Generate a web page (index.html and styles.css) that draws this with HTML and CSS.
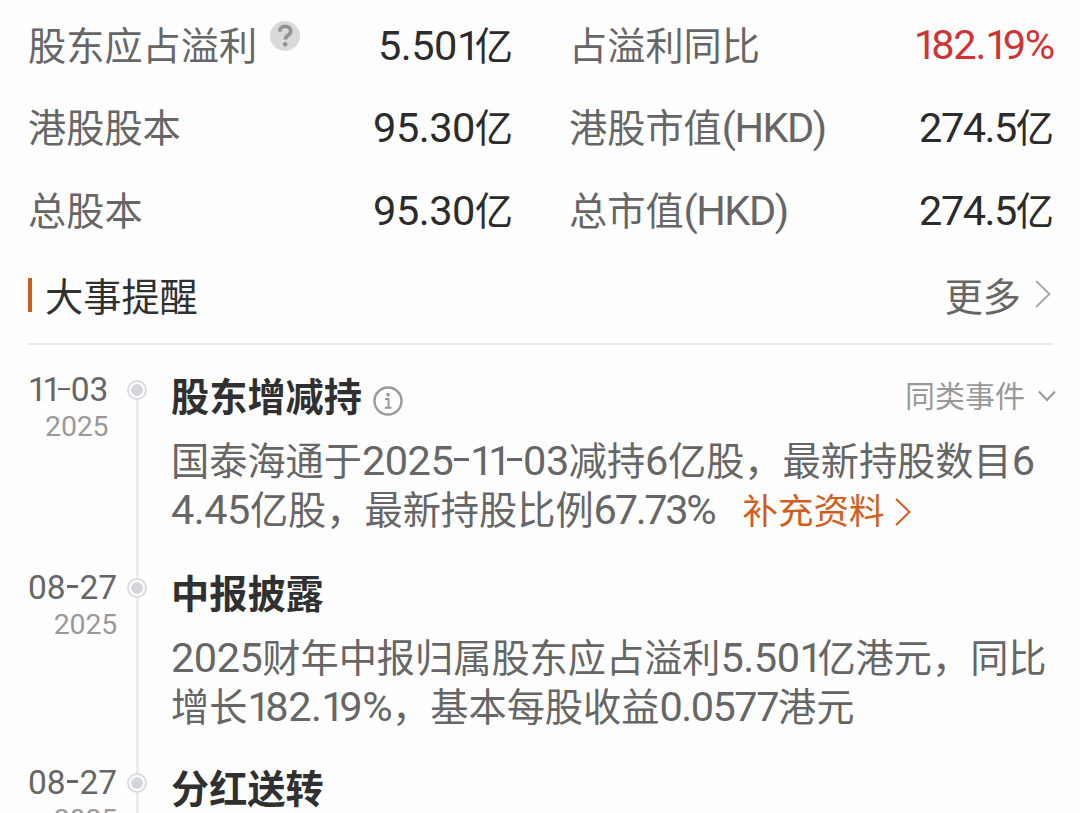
FILE: index.html
```html
<!DOCTYPE html>
<html lang="zh-CN">
<head>
  <meta charset="UTF-8" />
  <meta name="viewport" content="width=device-width, initial-scale=1.0" />
  <title>大事提醒</title>
  <link rel="stylesheet" href="styles.css">
</head>
<body>

  <!-- Key figures -->
  <section class="figures">
    <div class="figure">
      <span class="label">股东应占溢利</span>
      <svg class="help" viewBox="0 0 30 30">
        <circle cx="15" cy="15" r="15" fill="#dadada"/>
        <path d="M9.600 10.600C9.800 7.200 12 5.400 15.200 5.400c3.300 0 5.500 1.800 5.500 4.600 0 2.300-1.200 3.300-2.900 4.500-1.700 1.200-2.400 2-2.400 4.100" fill="none" stroke="#929296" stroke-width="3.700"/>
        <circle cx="15.200" cy="23.200" r="2.300" fill="#929296"/>
      </svg>
      <span class="value"><span class="num">5.50<i class="one">1</i></span>亿</span>
    </div>
    <div class="figure">
      <span class="label">占溢利同比</span>
      <span class="value up"><span class="num"><i class="one">1</i>82.<i class="one">1</i>9%</span></span>
    </div>
    <div class="figure">
      <span class="label">港股股本</span>
      <span class="value"><span class="num">95.30</span>亿</span>
    </div>
    <div class="figure">
      <span class="label">港股市值<span class="num tight">(HKD)</span></span>
      <span class="value"><span class="num tight">274.5</span>亿</span>
    </div>
    <div class="figure">
      <span class="label">总股本</span>
      <span class="value"><span class="num">95.30</span>亿</span>
    </div>
    <div class="figure">
      <span class="label">总市值<span class="num tight">(HKD)</span></span>
      <span class="value"><span class="num tight">274.5</span>亿</span>
    </div>
  </section>

  <!-- Section title -->
  <header class="section-head">
    <h2>大事提醒</h2>
    <a class="more">更多
      <svg width="16" height="28" viewBox="0 0 16 28"><path d="M1 1l13.500 13L1 27" fill="none" stroke="#aaa" stroke-width="2"/></svg>
    </a>
  </header>

  <!-- Events -->
  <section class="timeline">
    <article class="event">
      <div class="date">
        <span class="day"><i class="one">1</i><i class="one">1</i><i class="dash"></i>03</span>
        <span class="year">2025</span>
      </div>
      <div class="axis"><span class="dot"></span></div>
      <div class="content">
        <div class="title-row">
          <h3>股东增减持</h3>
          <svg class="info" viewBox="0 0 30 30">
            <circle cx="15" cy="15" r="13.500" fill="none" stroke="#999" stroke-width="2.400"/>
            <circle cx="15" cy="8.700" r="1.900" fill="#999"/>
            <path d="M12 13h3.500v8.500M11.800 21.800h6.700" fill="none" stroke="#999" stroke-width="2"/>
          </svg>
          <a class="similar">同类事件
            <svg width="18" height="12" viewBox="0 0 18 12"><path d="M1 1.500l8 8.500 8-8.500" fill="none" stroke="#999" stroke-width="2"/></svg>
          </a>
        </div>
        <p>国泰海通于<span class="num">2025<i class="dash"></i><i class="one">1</i><i class="one">1</i><i class="dash"></i>03</span>减持<span class="num">6</span>亿股，最新持股数目<span class="num">6</span><br><span class="num">4.45</span>亿股，最新持股比例<span class="num percent">67.73%</span><a class="extra">补充资料<svg width="16" height="28" viewBox="0 0 16 28"><path d="M1 1l13.500 13L1 27" fill="none" stroke="#d35d1c" stroke-width="2"/></svg></a></p>
      </div>
    </article>

    <article class="event event-short">
      <div class="date">
        <span class="day">08<i class="dash"></i>27</span>
        <span class="year">2025</span>
      </div>
      <div class="axis"><span class="dot"></span></div>
      <div class="content">
        <div class="title-row">
          <h3>中报披露</h3>
        </div>
        <p><span class="num">2025</span>财年中报归属股东应占溢利<span class="num">5.50<i class="one">1</i></span>亿港元，同比<br>增长<span class="num"><i class="one">1</i>82.<i class="one">1</i>9%</span>，基本每股收益<span class="num tight">0.0577</span>港元</p>
      </div>
    </article>

    <article class="event">
      <div class="date">
        <span class="day">08<i class="dash"></i>27</span>
        <span class="year">2025</span>
      </div>
      <div class="axis"><span class="dot"></span></div>
      <div class="content">
        <div class="title-row">
          <h3>分红送转</h3>
        </div>
      </div>
    </article>
  </section>

</body>
</html>
```
FILE: styles.css
```css
* {
  box-sizing: border-box;
}

body {
  font-family: Roboto, "Noto Sans CJK SC", sans-serif;
  font-size: 38.2px;
  margin: 0;
  height: 813px;
  overflow: hidden;
  background: #fefefe;
  color: #666;
}

h2, h3, p {
  margin: 0;
  font-size: inherit;
}

svg {
  display: block;
  flex: none;
}

i {
  font-style: normal;
}

/* Latin digits are set a little larger than the Chinese text */
.num {
  font-size: 41.5px;
  line-height: 1;
  letter-spacing: -0.5px;
}

.tight {
  letter-spacing: -1.5px;
}

.percent {
  letter-spacing: -2.3px;
}

.one {
  letter-spacing: -0.13em;
}

.dash {
  display: inline-block;
  width: 0.35em;
  height: 0.08em;
  margin: 0 0.03em;
  background: currentColor;
  vertical-align: 0.32em;
}

/* Key figures */
.figures {
  display: grid;
  grid-template-columns: 1fr 1fr;
  grid-auto-rows: 82.5px;
  column-gap: 56px;
  padding: 2px 26px 0 28px;
}

.figure {
  display: flex;
  align-items: center;
  white-space: nowrap;
}

.help {
  width: 30px;
  height: 30px;
  margin: 0 0 14px 13px;
}

.value {
  margin-left: auto;
  color: #2b2b2b;
}

.up {
  padding-top: 6px;
  color: #cf3434;
}

.up .num {
  letter-spacing: -1.2px;
}

.up .one {
  letter-spacing: -0.14em;
}

/* Section title */
.section-head {
  display: flex;
  align-items: center;
  justify-content: space-between;
  height: 95.5px;
  margin: 0 26px 0 28px;
  padding-bottom: 4px;
  border-bottom: 2px solid #ececec;
}

.section-head h2 {
  display: flex;
  align-items: center;
  gap: 13px;
  font-weight: 400;
  color: #303030;
}

.section-head h2::before {
  content: "";
  width: 4px;
  height: 34px;
  margin-top: 1px;
  background: #d35d1c;
}

.more {
  display: flex;
  align-items: center;
  gap: 14px;
  padding-right: 3px;
}

/* Timeline */
.timeline {
  padding: 35px 24px 0 28px;
}

.event {
  display: grid;
  grid-template-columns: 99px 20px 1fr;
  height: 197.5px;
}

.event-short {
  height: 195px;
}

.date {
  display: flex;
  flex-direction: column;
  align-items: flex-end;
  justify-self: start;
  align-self: start;
  margin-top: -9px;
}

.day {
  font-size: 33.5px;
  line-height: 38px;
}

.year {
  font-size: 28.5px;
  line-height: 35px;
  letter-spacing: -0.2px;
  color: #999;
}

.axis {
  display: flex;
  flex-direction: column;
  align-items: center;
}

.axis::after {
  content: "";
  flex: 1;
  width: 3px;
  background: #ececec;
}

.dot {
  width: 20px;
  height: 20px;
  border: 2px solid #d9dbdf;
  border-radius: 50%;
  background: radial-gradient(circle, #d2d5da 5.5px, #fefefe 6.2px);
}

.content {
  margin: -10px 0 0 24px;
  white-space: nowrap;
}

.title-row {
  display: flex;
  align-items: center;
  height: 48px;
}

.title-row h3 {
  font-weight: 700;
  color: #303030;
}

.info {
  width: 30px;
  height: 30px;
  margin: 14px 0 0 11px;
}

.similar {
  display: flex;
  align-items: center;
  gap: 13px;
  margin-left: auto;
  font-size: 30px;
  color: #999;
}

.similar svg {
  margin-top: 4px;
}

.content p {
  margin-top: 19.5px;
  line-height: 49px;
}

.extra {
  display: inline-flex;
  align-items: center;
  gap: 11px;
  margin-left: 28px;
  font-size: 35.5px;
  line-height: 40px;
  color: #d35d1c;
}
```
